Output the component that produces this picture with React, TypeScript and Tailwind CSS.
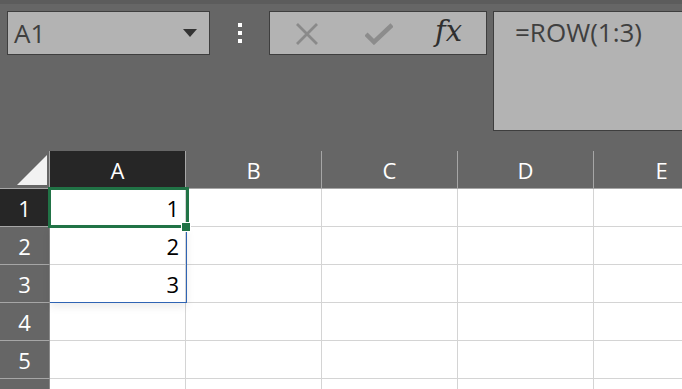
import React from "react";

const font = { fontFamily: '"Open Sans", "Noto Sans", sans-serif' };

function XIcon() {
  return (
    <svg width="24" height="22" viewBox="0 0 24 22">
      <path d="M2 1 L22 21 M22 1 L2 21" stroke="#8a8a8a" strokeWidth="2.8" strokeLinecap="butt" fill="none" />
    </svg>
  );
}

function CheckIcon() {
  return (
    <svg width="28" height="22" viewBox="0 0 28 22">
      <path d="M1 11 L9 19 L27 2" stroke="#8c8c8c" strokeWidth="4.5" fill="none" strokeLinejoin="miter" />
    </svg>
  );
}

const cols = ["A", "B", "C", "D", "E"];
const rows = [1, 2, 3, 4, 5, 6];
const values: Record<number, string> = { 1: "1", 2: "2", 3: "3" };

export default function App() {
  return (
    <div className="w-[682px] h-[389px] overflow-hidden bg-[#666666] relative" style={font}>
      {/* top toolbar */}
      <div className="h-[151px] relative">
        <div className="h-[4px] bg-[#5c5c5c]" />
        <div className="flex items-start pt-[7px] pl-[7px]">
          <div className="w-[203px] h-[44px] bg-[#b3b3b3] border border-[#3e3e3e] flex items-center pl-[6px] pr-[12px] justify-between">
            <span className="text-[26px] text-[#3f3f3f] leading-none">A1</span>
            <svg width="14" height="8" viewBox="0 0 14 8">
              <path d="M0 0 H14 L7 8 Z" fill="#333333" />
            </svg>
          </div>
          <div className="w-[59px] flex flex-col items-center pt-[12px] gap-[4px]">
            <div className="w-[4px] h-[4px] bg-white" />
            <div className="w-[4px] h-[4px] bg-white" />
            <div className="w-[4px] h-[4px] bg-white" />
          </div>
          <div className="w-[218px] h-[44px] bg-[#b3b3b3] border border-[#3e3e3e] flex items-center">
            <div className="ml-[25px] mt-[1px]"><XIcon /></div>
            <div className="ml-[46px] mt-[1px]"><CheckIcon /></div>
            <div
              className="ml-[42px] text-[29px] italic text-[#2f2f2f] leading-none -mt-[4px]"
              style={{ fontFamily: '"DejaVu Serif", "Liberation Serif", serif' }}
            >
              fx
            </div>
          </div>
          <div className="ml-[6px] flex-1 h-[120px] bg-[#b3b3b3] border border-[#3e3e3e] border-r-0 pl-[21px] pt-[7px]">
            <span className="text-[26px] text-[#3f3f3f] leading-none">=ROW(1:3)</span>
          </div>
        </div>
      </div>

      {/* grid */}
      <div className="relative">
        <div className="grid grid-cols-[50px_136px_136px_136px_136px_136px] grid-rows-[38px_38px_38px_38px_38px_38px_38px] w-[730px]">
          {/* corner */}
          <div className="bg-[#666666] border-b border-[#a6a6a6] border-r border-r-[#a6a6a6] relative">
            <svg className="absolute left-[17px] top-[4px]" width="30" height="30" viewBox="0 0 30 30">
              <path d="M30 0 V30 H0 Z" fill="#f2f2f2" />
            </svg>
          </div>
          {cols.map((c, i) => (
            <div
              key={c}
              className={`${i === 0 ? "bg-[#262626]" : "bg-[#666666]"} border-b border-[#a6a6a6] border-r border-r-[#a6a6a6] flex items-center justify-center text-white text-[22px] leading-none`}
            >
              {c}
            </div>
          ))}
          {rows.map((r) => (
            <React.Fragment key={r}>
              <div
                className={`${r === 1 ? "bg-[#262626]" : "bg-[#666666]"} border-b border-[#a6a6a6] border-r border-r-[#8a8a8a] flex items-center justify-center text-white text-[22px] leading-none`}
              >
                {r < 6 ? r : ""}
              </div>
              {cols.map((c, ci) => (
                <div
                  key={c}
                  className="bg-white border-b border-r border-[#d4d4d4] flex items-center justify-end pr-[6px] text-black text-[22px] leading-none"
                >
                  {ci === 0 ? values[r] ?? "" : ""}
                </div>
              ))}
            </React.Fragment>
          ))}
        </div>

        {/* spill range blue border */}
        <div className="absolute left-[50px] top-[76px] w-[137px] h-[76px] border-r border-b border-[#2f64b4] shadow-[0_4px_8px_rgba(0,0,0,0.08)]" />
        {/* selected cell green border */}
        <div className="absolute left-[48px] top-[36px] w-[141px] h-[41px] border-[3px] border-[#217346]" />
        {/* fill handle */}
        <div className="absolute left-[181px] top-[71px] w-[10px] h-[10px] bg-[#217346] border border-white" />
      </div>
    </div>
  );
}
